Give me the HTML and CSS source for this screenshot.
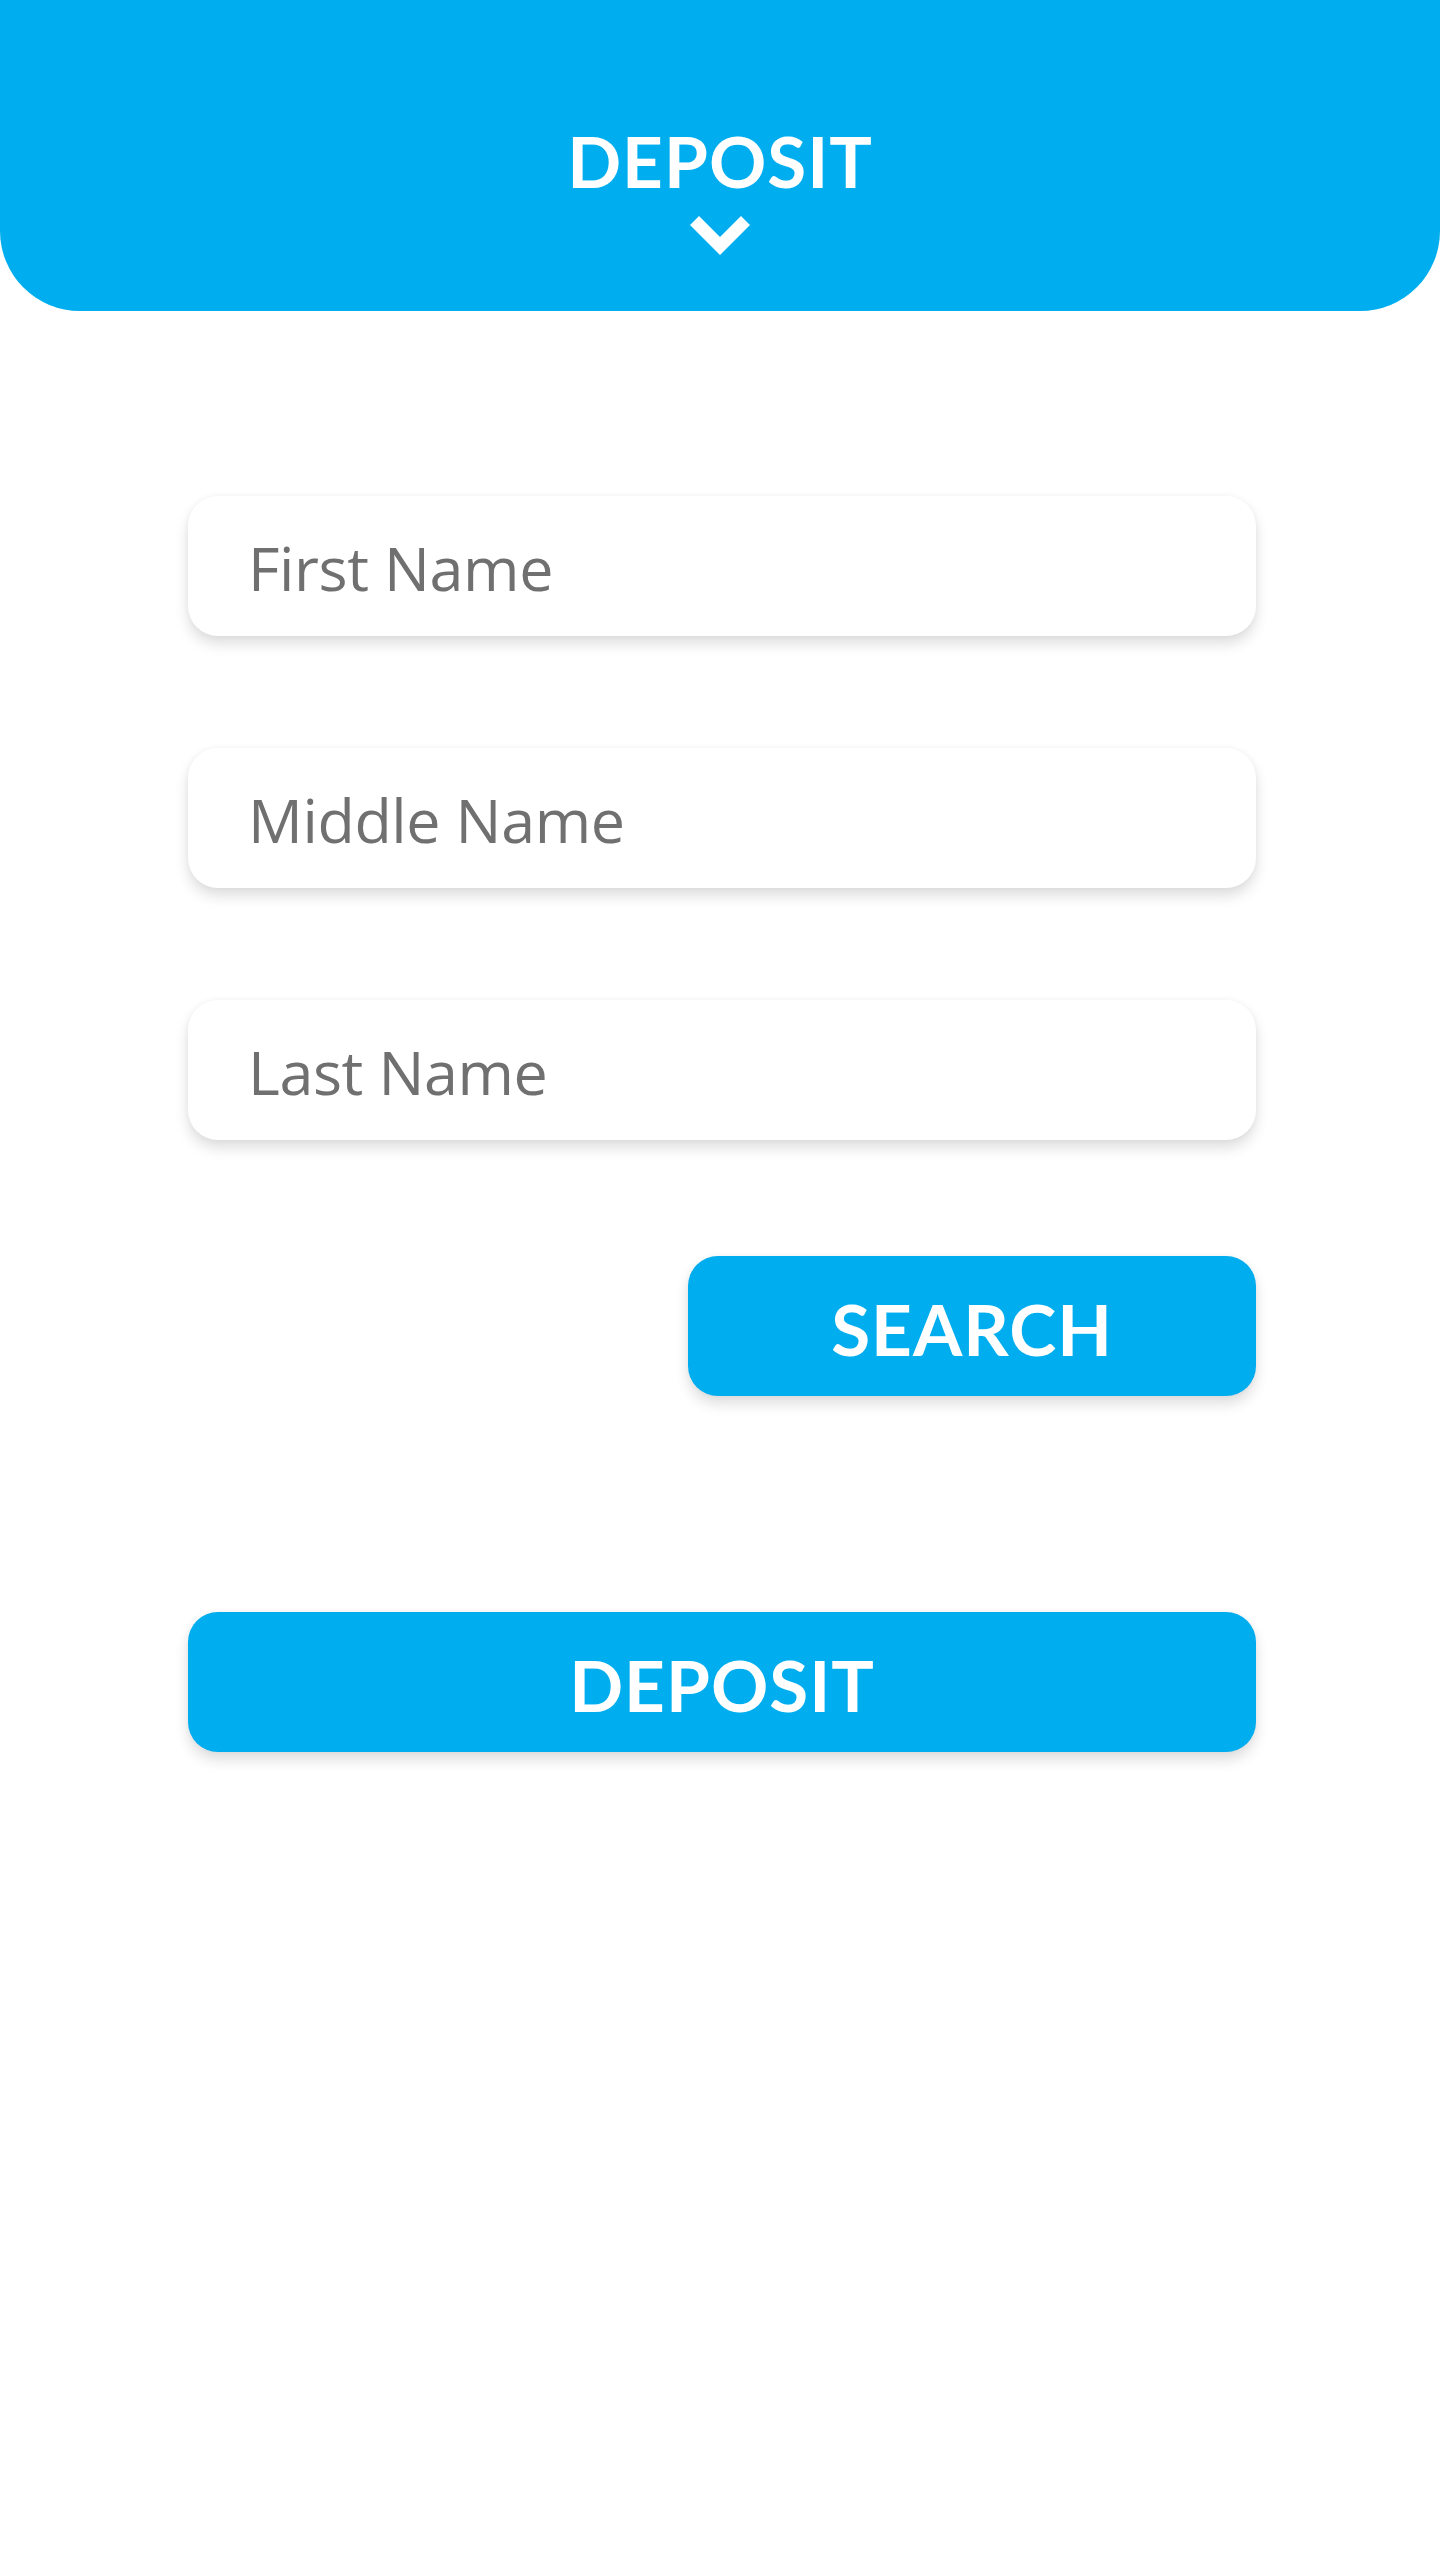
FILE: index.html
```html
<!DOCTYPE html>
<html lang="en">
<head>
<meta charset="utf-8">
<title>Deposit</title>
<link rel="stylesheet" href="styles.css">
</head>
<body>
<header class="topbar">
  <h1 class="topbar-title">DEPOSIT</h1>
  <svg class="chevron" width="60" height="39" viewBox="0 0 60 39" aria-hidden="true">
    <polygon points="0,9 9,0 30,21 51,0 60,9 30,39" fill="#ffffff"/>
  </svg>
</header>
<main class="form">
  <div class="field"><span class="field-label">First Name</span></div>
  <div class="field"><span class="field-label">Middle Name</span></div>
  <div class="field"><span class="field-label">Last Name</span></div>
  <div class="search-row">
    <button class="btn btn-search" type="button">SEARCH</button>
  </div>
  <button class="btn btn-deposit" type="button">DEPOSIT</button>
</main>
</body>
</html>
```

FILE: styles.css
```css
* { box-sizing: border-box; }

html, body {
  margin: 0;
  padding: 0;
  background: #ffffff;
}

body {
  width: 1440px;
  min-height: 2564px;
  font-family: "Lato", "Open Sans", sans-serif;
}

.topbar {
  height: 311px;
  background: #00aeef;
  border-radius: 0 0 80px 80px;
  display: flex;
  flex-direction: column;
  align-items: center;
  padding-top: 125px;
}

.topbar-title {
  margin: 0;
  font-family: "Lato", sans-serif;
  font-weight: 700;
  font-size: 71px;
  line-height: 1;
  color: #ffffff;
  letter-spacing: 1px;
}

.chevron {
  display: block;
  margin-top: 20px;
}

.form {
  display: flex;
  flex-direction: column;
  padding: 185px 184px 0 188px;
}

.field {
  height: 140px;
  background: #ffffff;
  border-radius: 30px;
  box-shadow: 0 8px 14px rgba(0, 0, 0, 0.13), 0 0 6px rgba(0, 0, 0, 0.04);
  display: flex;
  align-items: center;
  padding-left: 60px;
  padding-top: 2px;
  margin-bottom: 112px;
}

.field:nth-child(3) {
  margin-bottom: 116px;
}

.field-label {
  font-family: "Open Sans", "Noto Sans", sans-serif;
  font-size: 61px;
  line-height: 1;
  letter-spacing: -0.4px;
  color: #707070;
}

.search-row {
  display: flex;
  justify-content: flex-end;
  margin-bottom: 216px;
}

.btn {
  height: 140px;
  border: 0;
  border-radius: 30px;
  background: #00aeef;
  color: #ffffff;
  font-family: "Lato", sans-serif;
  font-weight: 700;
  font-size: 71px;
  line-height: 1;
  letter-spacing: 1px;
  display: flex;
  align-items: center;
  justify-content: center;
  padding: 4px 0 0;
  box-shadow: 0 8px 14px rgba(0, 0, 0, 0.13), 0 0 6px rgba(0, 0, 0, 0.04);
  cursor: pointer;
}

.btn-search {
  width: 568px;
}

.btn-deposit {
  width: 1068px;
}
```
